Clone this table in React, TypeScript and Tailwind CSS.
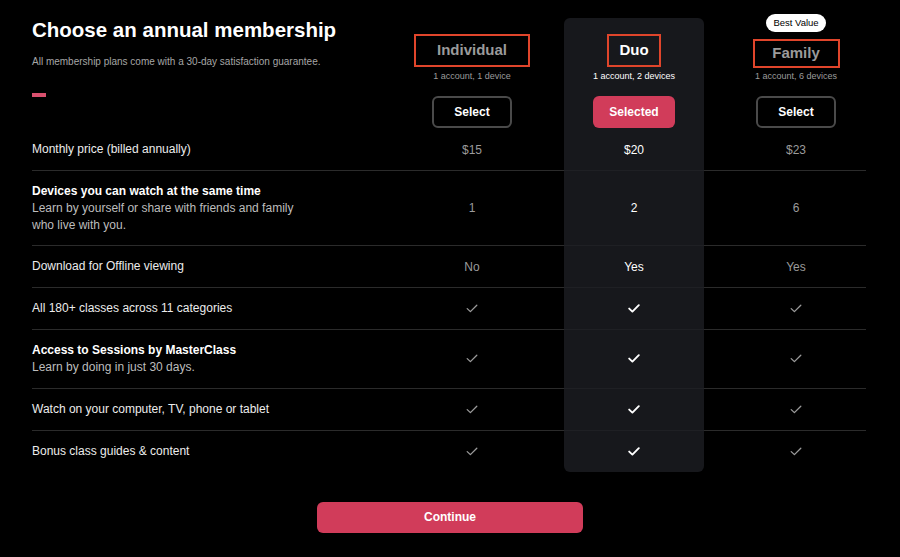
import React from "react"

type Row = {
  label: string
  bold?: boolean
  desc?: string[]
  vals: (string | "check")[]
}

const rows: Row[] = [
  { label: "Monthly price (billed annually)", vals: ["$15", "$20", "$23"] },
  {
    label: "Devices you can watch at the same time",
    bold: true,
    desc: ["Learn by yourself or share with friends and family", "who live with you."],
    vals: ["1", "2", "6"],
  },
  { label: "Download for Offline viewing", vals: ["No", "Yes", "Yes"] },
  { label: "All 180+ classes across 11 categories", vals: ["check", "check", "check"] },
  {
    label: "Access to Sessions by MasterClass",
    bold: true,
    desc: ["Learn by doing in just 30 days."],
    vals: ["check", "check", "check"],
  },
  { label: "Watch on your computer, TV, phone or tablet", vals: ["check", "check", "check"] },
  { label: "Bonus class guides & content", vals: ["check", "check", "check"] },
]

function Check({ active }: { active?: boolean }) {
  return (
    <svg width="12" height="9" viewBox="0 0 12 9" fill="none">
      <path
        d="M1.2 4.6 L4.4 7.6 L10.8 1.2"
        stroke={active ? "#ffffff" : "#9b9b9b"}
        strokeWidth={active ? 1.9 : 1.3}
        strokeLinecap="round"
        strokeLinejoin="round"
      />
    </svg>
  )
}

function PlanHeader({
  name,
  boxW,
  account,
  selected,
  family,
}: {
  name: string
  boxW: string
  account: string
  selected?: boolean
  family?: boolean
}) {
  return (
    <div className="flex flex-col items-center">
      <div className="mt-[16px] h-[33px] flex justify-center">
        <div
          className={`${boxW} ${family ? "mt-[5px] h-[29px]" : "h-[33px]"} border-2 border-[#e0452b] flex items-center justify-center text-[15px] font-bold ${
            selected ? "text-white" : "text-[#9b9b9b]"
          }`}
        >
          {name}
        </div>
      </div>
      <div className={`mt-[3px] text-[9px] leading-[12px] ${selected ? "text-white" : "text-[#9b9b9b]"}`}>
        {account}
      </div>
      {selected ? (
        <button className="mt-[14px] w-[82px] h-[32px] rounded-[6px] bg-[#d13c5a] text-[12px] font-bold text-white">
          Selected
        </button>
      ) : (
        <button className="mt-[14px] w-[80px] h-[32px] rounded-[6px] border-2 border-[#4a4a4a] text-[12px] font-bold text-white">
          Select
        </button>
      )}
    </div>
  )
}

export default function App() {
  return (
    <div className="w-[900px] h-[557px] bg-black text-white pt-[18px] font-['Liberation_Sans',Arial,sans-serif] overflow-hidden">
      <div className="ml-[32px] w-[834px]">
        {/* header */}
        <div className="grid grid-cols-[348px_140px_140px_140px] gap-x-[22px] h-[111px]">
          <div>
            <h1 className="text-[20.5px] leading-[24px] font-bold text-white">Choose an annual membership</h1>
            <p className="mt-[13px] text-[10px] leading-[14px] text-[#a6a6a6]">
              All membership plans come with a 30-day satisfaction guarantee.
            </p>
            <div className="mt-[24px] w-[14px] h-1 bg-[#d9506e]" />
          </div>
          <PlanHeader name="Individual" boxW="w-[116px]" account="1 account, 1 device" />
          <div className="bg-[#17181c] rounded-t-[6px]">
            <PlanHeader name="Duo" boxW="w-[54px]" account="1 account, 2 devices" selected />
          </div>
          <div className="relative">
            <div className="absolute top-[-4px] left-1/2 -translate-x-1/2 w-[60px] h-[18px] rounded-full bg-white text-black text-[9.5px] flex items-center justify-center">
              Best Value
            </div>
            <PlanHeader name="Family" boxW="w-[87px]" account="1 account, 6 devices" family />
          </div>
        </div>

        {/* rows */}
        {rows.map((r, i) => {
          const last = i === rows.length - 1
          return (
            <div
              key={r.label}
              className={`grid grid-cols-[348px_140px_140px_140px] gap-x-[22px] ${last ? "" : "border-b border-[#2b2b2b]"}`}
            >
              <div className="py-3 text-[12px]">
                <div className={`leading-[17px] ${r.bold ? "font-bold text-white" : "text-[#ececec]"}`}>{r.label}</div>
                {r.desc && (
                  <div className="leading-[16.5px] text-[#bdbdbd]">
                    {r.desc.map((d) => (
                      <div key={d}>{d}</div>
                    ))}
                  </div>
                )}
              </div>
              {r.vals.map((v, j) => {
                const duo = j === 1
                return (
                  <div
                    key={j}
                    className={`flex items-center justify-center text-[12px] ${
                      duo
                        ? `bg-[#17181c] text-white ${last ? "rounded-b-[6px]" : "-mb-px border-b border-[#1f2024]"}`
                        : "text-[#9b9b9b]"
                    }`}
                  >
                    {v === "check" ? <Check active={duo} /> : v}
                  </div>
                )
              })}
            </div>
          )
        })}
      </div>

      <div className="mt-[30px] flex justify-center">
        <button className="w-[266px] h-[31px] rounded-[6px] bg-[#d13c5a] text-[12px] font-bold text-white">
          Continue
        </button>
      </div>
    </div>
  )
}
